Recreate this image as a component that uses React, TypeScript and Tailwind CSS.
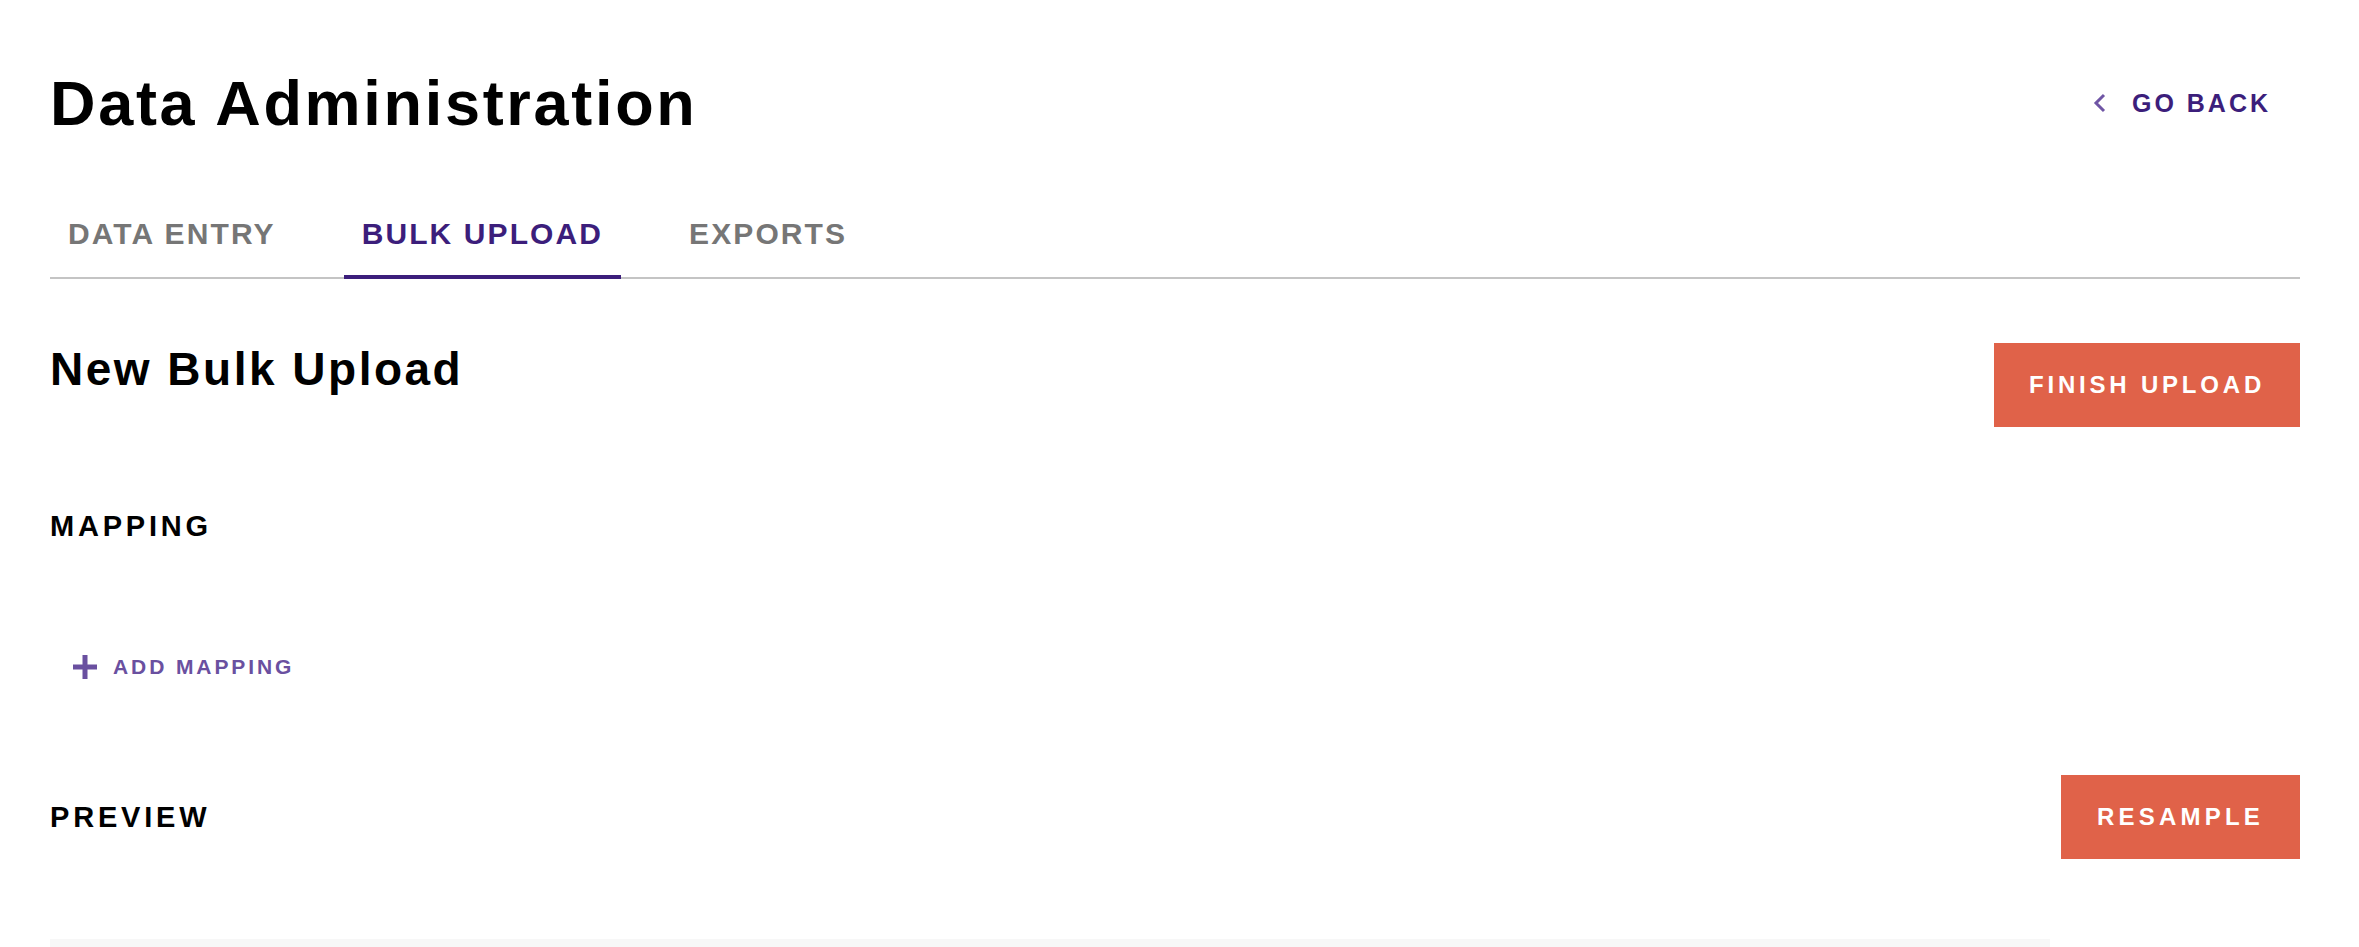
import { useState } from 'react';

const tabs = ['DATA ENTRY', 'BULK UPLOAD', 'EXPORTS'];

function PlusIcon() {
  return (
    <svg width="24" height="24" viewBox="0 0 24 24" className="shrink-0">
      <rect x="9.5" y="0" width="5" height="24" fill="#6a50a0" />
      <rect x="0" y="9.5" width="24" height="5" fill="#6a50a0" />
    </svg>
  );
}

function ChevronLeft() {
  return (
    <svg width="14" height="20" viewBox="0 0 14 20" className="shrink-0">
      <polyline points="11,2 3,10 11,18" fill="none" stroke="#6f55a5" strokeWidth="3" />
    </svg>
  );
}

export default function App() {
  const [active, setActive] = useState(1);

  return (
    <div className="min-h-screen bg-white font-['Liberation_Sans',Arial,sans-serif] pl-[50px] pr-[59px] pt-[67px]">
      {/* Header */}
      <div className="flex items-center justify-between">
        <h1 className="text-[63px] leading-[72px] font-bold tracking-[2.7px] text-black">Data Administration</h1>
        <button className="flex items-center gap-[25px] pr-[29px] text-[#3c1e7b]">
          <ChevronLeft />
          <span className="text-[25px] leading-[32px] font-bold tracking-[3px]">GO BACK</span>
        </button>
      </div>

      {/* Tabs */}
      <div className="mt-[65px] flex gap-[50px] border-b-2 border-[#c4c4c4]">
        {tabs.map((t, i) => (
          <button
            key={t}
            onClick={() => setActive(i)}
            className={`-mb-[2px] px-[18px] pt-[12px] pb-[23px] border-b-4 text-[30px] leading-[36px] font-bold tracking-[2.1px] ${
              active === i ? 'border-[#3c1e7b] text-[#3c1e7b]' : 'border-transparent text-[#767676]'
            }`}
          >
            {t}
          </button>
        ))}
      </div>

      {/* New Bulk Upload */}
      <div className="mt-[62px] flex items-start justify-between">
        <h2 className="text-[46px] leading-[56px] font-bold tracking-[2.5px] text-black">New Bulk Upload</h2>
        <button className="mt-[2px] flex h-[84px] w-[306px] items-center justify-center bg-[#e06249] text-[24px] font-bold tracking-[3.8px] text-white">
          FINISH UPLOAD
        </button>
      </div>

      {/* Mapping */}
      <h3 className="mt-[81px] text-[29px] leading-[36px] font-bold tracking-[3.8px] text-black">MAPPING</h3>
      <button className="mt-[111px] ml-[23px] flex items-center gap-[16px] text-[#6a50a0]">
        <PlusIcon />
        <span className="text-[21px] leading-[24px] font-bold tracking-[2.9px]">ADD MAPPING</span>
      </button>

      {/* Preview */}
      <div className="mt-[96px] flex items-center justify-between">
        <h3 className="text-[29px] leading-[36px] font-bold tracking-[3.8px] text-black">PREVIEW</h3>
        <button className="flex h-[84px] w-[239px] items-center justify-center bg-[#e06249] text-[24px] font-bold tracking-[4.2px] text-white">
          RESAMPLE
        </button>
      </div>

      <div className="mt-[80px] h-[300px] w-[2000px] bg-[#f7f7f7]" />
    </div>
  );
}
